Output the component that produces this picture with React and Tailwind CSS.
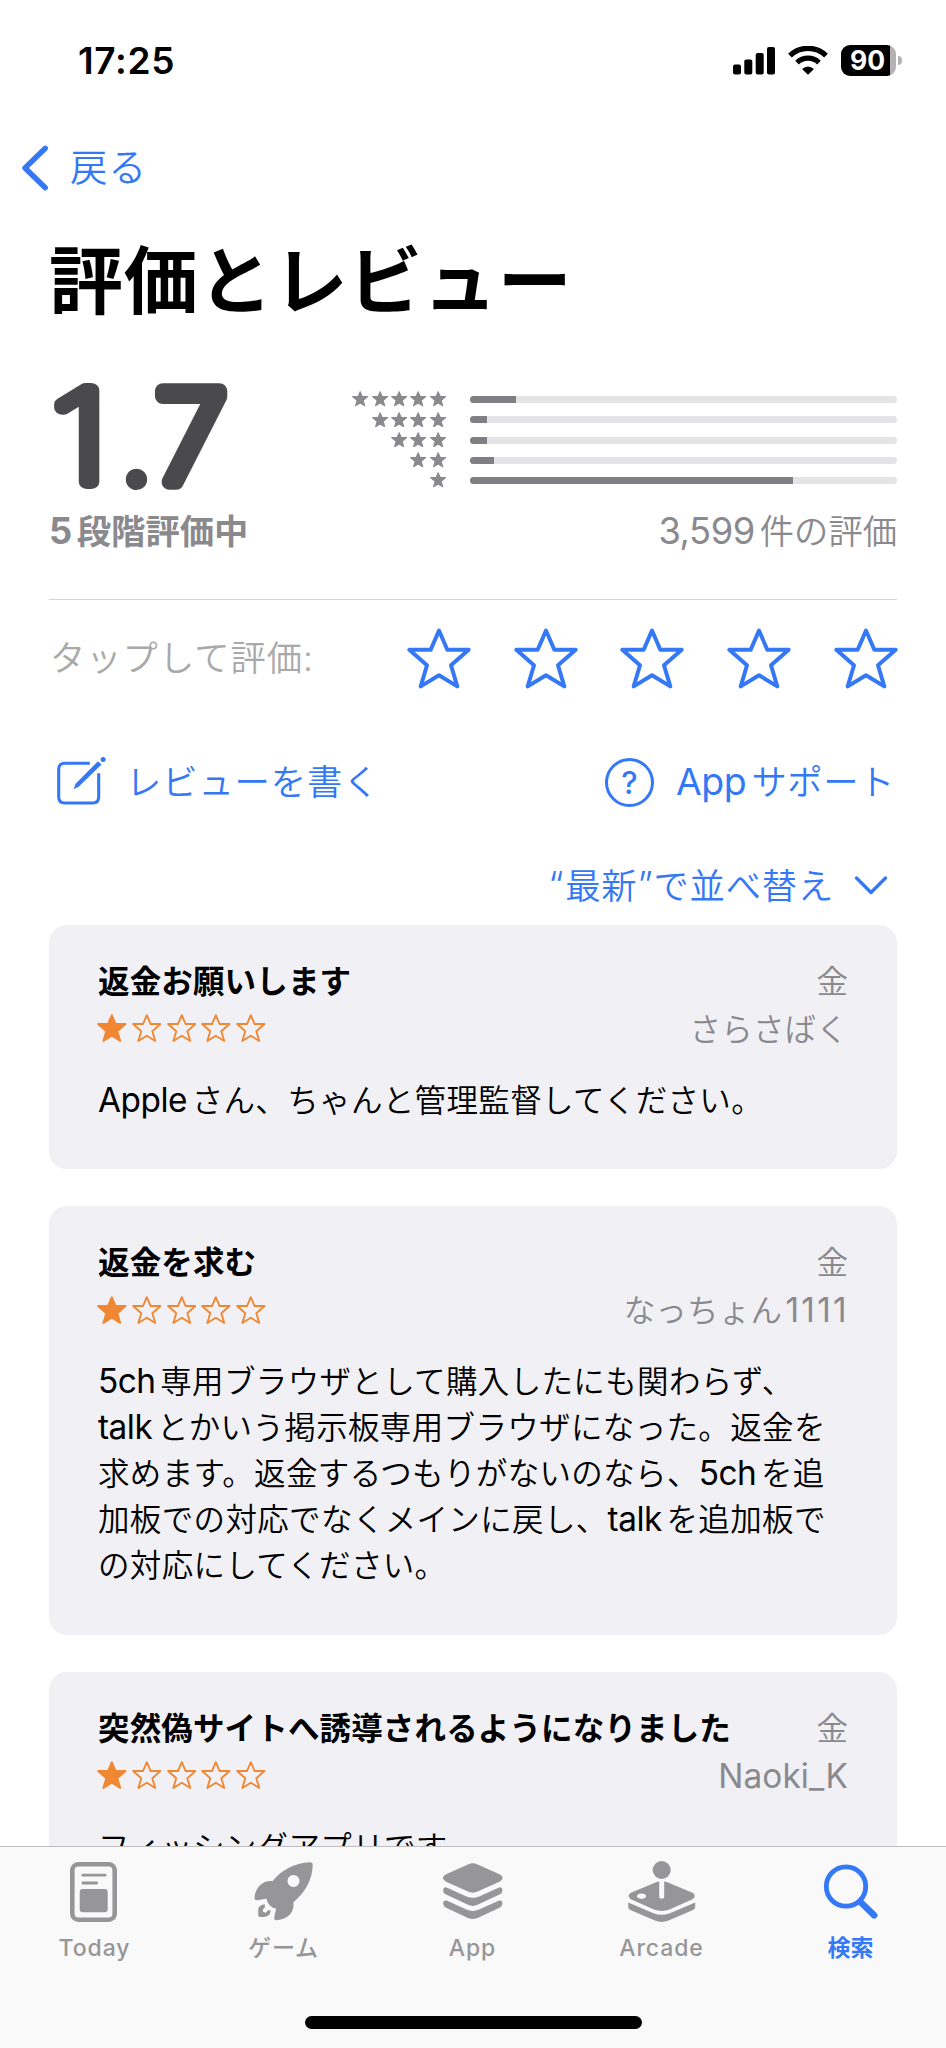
const LATIN = /([A-Za-z0-9_,:]+)/;

function Mixed({ children }) {
  const parts = children.split(LATIN).filter(Boolean);
  return parts.map((part, i) => {
    if (!LATIN.test(part)) return <span key={i}>{part}</span>;
    const before = i > 0 && !/[、。]$/.test(parts[i - 1]);
    const after = i < parts.length - 1;
    return (
      <span
        key={i}
        className={
          'text-[1.06em] leading-none [letter-spacing:var(--ls)] [font-weight:var(--latin)] ' +
          (before ? 'ml-[0.1em] ' : '') +
          (after ? 'mr-[0.14em]' : '')
        }
      >
        {part}
      </span>
    );
  });
}

const STAR = 'M0 -31.5 L8.3 -12.3 L29.7 -12.3 L12 3.3 L18.3 24.4 L0 13.2 L-18.3 24.4 L-12 3.3 L-29.7 -12.3 L-8.3 -12.3 Z';

function Star({ className, filled }) {
  return (
    <svg viewBox="-32 -34 64 61" className={className}>
      <path d={STAR} fill={filled ? 'currentColor' : 'none'} stroke="currentColor" strokeWidth="4" strokeLinejoin="round" />
    </svg>
  );
}

function StatusBar() {
  return (
    <div className="flex h-[121px] items-center justify-between pr-[44px] pl-[78px]">
      <span className="text-[37px] font-semibold tracking-[0.7px]">17:25</span>
      <div className="flex items-center">
        <svg width="42" height="30" viewBox="0 0 42 30">
          <rect x="0" y="18.5" width="8" height="10" rx="2" />
          <rect x="11.3" y="13.5" width="8" height="15" rx="2" />
          <rect x="22.7" y="7" width="8" height="21.5" rx="2" />
          <rect x="34" y="1" width="8" height="27.5" rx="2" />
        </svg>
        <svg width="40" height="30" viewBox="0 0 40 30" className="ml-[13px]">
          <path d="M2 9.6 A26 26 0 0 1 38 9.6" fill="none" stroke="#000" strokeWidth="5.4" />
          <path d="M9 16.6 A16 16 0 0 1 31 16.6" fill="none" stroke="#000" strokeWidth="5.2" />
          <path d="M20 28.8 L14 23 Q20 17.8 26 23 Z" />
        </svg>
        <div className="ml-[13px] flex h-[31px] w-[55px] items-center justify-center rounded-[9px] bg-[linear-gradient(90deg,#000_49px,#b3b3b3_49px)] pr-[2px] text-[26.5px] leading-none font-bold text-white">
          90
        </div>
        <div className="ml-[2px] h-[9px] w-[4px] rounded-r-full bg-[#b3b3b3]" />
      </div>
    </div>
  );
}

const BARS = [
  { stars: 5, fill: 46 },
  { stars: 4, fill: 17 },
  { stars: 3, fill: 17 },
  { stars: 2, fill: 24 },
  { stars: 1, fill: 322.5 },
];

function Summary() {
  return (
    <div className="mx-[49px] flex h-[255px] flex-col border-b-[1.5px] border-[#d4d4d6] pt-[25px]">
      <div className="flex justify-between">
        <svg
          width="200"
          height="130"
          viewBox="49 370 200 130"
          className="overflow-visible"
          fontFamily="Inter"
          fill="#4a4a4c"
          stroke="#4a4a4c"
          strokeWidth="15.5"
          strokeLinejoin="round"
          strokeLinecap="round"
        >
          <text fontSize="126" fontWeight="100" strokeWidth="14" transform="translate(51.8 482) scale(1.22 1)">1</text>
          <text fontSize="72" fontWeight="600" strokeWidth="10" x="125" y="484">.</text>
          <text fontSize="125" fontWeight="200" transform="translate(155.5 481.5) scale(1.03 1)">7</text>
        </svg>
        <div className="flex flex-col pt-[19px]">
          {BARS.map((row) => (
            <div key={row.stars} className="flex h-[20.25px] items-center">
              <div className="flex w-[97px] justify-end gap-[3.1px] text-[#8a8a8e]">
                {Array.from({ length: row.stars }, (_, i) => (
                  <Star key={i} filled className="h-[15.5px] w-[16.3px]" />
                ))}
              </div>
              <div className="mt-px ml-[24px] h-[7px] w-[427px] overflow-hidden rounded-full bg-[#e4e4e6]">
                <div className="h-full bg-[#7f7f84]" style={{ width: row.fill }} />
              </div>
            </div>
          ))}
        </div>
      </div>
      <div className="mt-[7px] flex h-[50px] items-center justify-between text-[34.3px] leading-[50px] text-[#8a8a8e]">
        <span className="font-semibold [--latin:700]"><Mixed>5段階評価中</Mixed></span>
        <span><Mixed>3,599件の評価</Mixed></span>
      </div>
    </div>
  );
}

function EditIcon() {
  return (
    <svg width="54" height="54" viewBox="0 0 54 54">
      <path
        d="M34.8 8.3 H9.7 Q3.7 8.3 3.7 14.3 V42 Q3.7 48 9.7 48 H37.7 Q43.7 48 43.7 42 V18.2"
        fill="none"
        stroke="currentColor"
        strokeWidth="3.1"
      />
      <path d="M43 6.2 L46.5 9.6 L23.6 31.8 L18.6 34.2 L20.6 28.8 Z" fill="currentColor" />
      <circle cx="48.1" cy="4.5" r="2.5" fill="currentColor" />
    </svg>
  );
}

function Actions() {
  return (
    <>
      <div className="flex h-[117px] items-center justify-between pr-[48.3px] pl-[50px] text-[35.3px] text-[#a9a9a9]">
        <span className="pt-[2px] tracking-[1px]">タップして評価:</span>
        <div className="flex gap-[42.7px] text-[#3478f6]">
          {[1, 2, 3, 4, 5].map((n) => (
            <Star key={n} className="h-[61px] w-[64px]" />
          ))}
        </div>
      </div>
      <div className="flex h-[130px] items-center justify-between pr-[51px] pl-[55px] text-[35.3px] text-[#3478f6]">
        <div className="flex items-center">
          <EditIcon />
          <span className="ml-[17px] pt-[2px] tracking-[0.9px]">レビューを書く</span>
        </div>
        <div className="flex items-center">
          <span className="flex size-[49px] items-center justify-center rounded-full border-[3px] border-[#3478f6] text-[31px] leading-none font-medium">?</span>
          <span className="ml-[22px] pt-[2px] tracking-[0.6px]"><Mixed>Appサポート</Mixed></span>
        </div>
      </div>
      <div className="flex h-[78px] items-center justify-end pr-[58px] text-[35.3px] text-[#3478f6]">
        <span className="pt-[2px] tracking-[0.8px]">
          <span className="mr-[1px] text-[1.06em] leading-none">“</span>
          最新
          <span className="text-[1.06em] leading-none">”</span>
          で並べ替え
        </span>
        <svg width="34" height="22" viewBox="0 0 34 22" className="ml-[20px]">
          <path d="M2.5 3 L17 17.5 L31.5 3" fill="none" stroke="currentColor" strokeWidth="3.4" strokeLinecap="round" strokeLinejoin="round" />
        </svg>
      </div>
    </>
  );
}

const REVIEWS = [
  { title: '返金お願いします', user: 'さらさばく', lines: ['Appleさん、ちゃんと管理監督してください。'] },
  {
    title: '返金を求む',
    user: 'なっちょん1111',
    userClass: '[--ls:2.3px] -mr-[1px]',
    lines: [
      '5ch専用ブラウザとして購入したにも関わらず、',
      'talkとかいう掲示板専用ブラウザになった。返金を',
      '求めます。返金するつもりがないのなら、5chを追',
      '加板での対応でなくメインに戻し、talkを追加板で',
      'の対応にしてください。',
    ],
  },
  { title: '突然偽サイトへ誘導されるようになりました', user: 'Naoki_K', userClass: '[--ls:0.1px]', lines: ['フィッシングアプリです'] },
];

function Review({ title, user, userClass = '', lines }) {
  return (
    <article className="rounded-[18px] bg-[#f1f0f5] px-[49px] pt-[33px] pb-[45px] text-[31.5px] whitespace-nowrap">
      <div className="flex h-[48px] items-center justify-between">
        <h2 className="font-semibold tracking-[0.15px]">{title}</h2>
        <span className="text-[#8a8a8e]">金</span>
      </div>
      <div className="flex h-[48px] items-center justify-between">
        <div className="-mt-[3px] -ml-px flex gap-[5.2px] text-[#ef8733]">
          {[1, 2, 3, 4, 5].map((n) => (
            <Star key={n} filled={n === 1} className="h-[28.2px] w-[29.6px]" />
          ))}
        </div>
        <span className={'tracking-[0.2px] text-[#8a8a8e] ' + userClass}><Mixed>{user}</Mixed></span>
      </div>
      <div className="mt-[24px] tracking-[0.35px]">
        {lines.map((line) => (
          <p key={line} className="h-[46.1px] leading-[46.1px]"><Mixed>{line}</Mixed></p>
        ))}
      </div>
    </article>
  );
}

function TodayIcon() {
  return (
    <svg width="47" height="60" viewBox="0 0 47 60" fill="currentColor" className="mr-[2px]">
      <rect x="2.3" y="2.3" width="42.4" height="55.4" rx="6" fill="none" stroke="currentColor" strokeWidth="4.6" />
      <rect x="11.5" y="11.8" width="25" height="2.8" rx="1.4" />
      <rect x="11.5" y="19.6" width="16.5" height="2.8" rx="1.4" />
      <rect x="9.7" y="27" width="28" height="23.2" rx="3" />
    </svg>
  );
}

function RocketIcon() {
  return (
    <svg width="59" height="59" viewBox="0 0 59 59" fill="currentColor">
      <path
        fillRule="evenodd"
        d="M56 .2 Q58.7 .2 58.7 3 C58.5 19 50 31.5 39.4 40.3 C40.6 50.5 34 57.5 22.5 58.2 Q20 58.3 20.2 56 C20.5 52.5 22 49.5 22 46.3 Q18.5 46.2 15.8 43.5 Q12.8 40.8 12.6 36.8 C9 36.8 6 38.2 2.8 38.2 Q.3 38.2 .5 35.8 C1.4 25.5 8.5 18.3 18.4 19.2 C27 8.5 40 .8 56 .2 Z M39.5 13 a6 6 0 1 0 .01 0 Z"
      />
      <path
        d="M10.8 42.3 C6.2 42.8 4.2 45.2 4.2 49 V53 Q4.2 54.9 6.2 54.9 H10 C14.2 54.9 16.4 52.4 16.8 48.6 L13.6 48.2 C13 50.3 11.9 51 10.2 50.4 C8.3 49.6 8.2 47.4 10.8 45.8 Z"
      />
    </svg>
  );
}

function LayersIcon() {
  return (
    <svg width="60" height="57" viewBox="0 0 60 57" fill="currentColor">
      <path d="M25 1.4 Q29.8 -.8 34.6 1.4 L56.5 11.3 Q62.8 15 56.5 18.7 L34.6 28.6 Q29.8 30.8 25 28.6 L3.1 18.7 Q-3.2 15 3.1 11.3 Z" />
      <path d="M3.5 24.4 L23.5 33.4 Q29.8 36 36.1 33.4 L56.1 24.4 Q59.4 24 59.4 27.4 Q59.4 30 57 31.2 L34.6 41.8 Q29.8 44 25 41.8 L2.6 31.2 Q.2 30 .2 27.4 Q.2 24 3.5 24.4 Z" />
      <path d="M3.5 37.6 L23.5 46.6 Q29.8 49.2 36.1 46.6 L56.1 37.6 Q59.4 37.2 59.4 40.6 Q59.4 43.2 57 44.4 L34.6 55 Q29.8 57.2 25 55 L2.6 44.4 Q.2 43.2 .2 40.6 Q.2 37.2 3.5 37.6 Z" />
    </svg>
  );
}

function ArcadeIcon() {
  return (
    <svg width="68" height="61" viewBox="0 0 68 61" fill="currentColor">
      <circle cx="33.7" cy="9" r="9" />
      <path
        fillRule="evenodd"
        d="M27.5 21.4 Q29.5 20.6 31.2 20.6 V36 Q31.2 37.8 33.7 37.8 Q36.2 37.8 36.2 36 V20.6 Q38 20.6 39.9 21.4 L64.5 31.8 Q69.2 35 64.5 38.2 L41.5 48.6 Q33.7 51.4 25.9 48.6 L2.9 38.2 Q-1.8 35 2.9 31.8 Z M13.5 32.4 a4.5 2.8 0 1 0 .01 0 Z"
      />
      <path d="M.2 41.6 L25.5 52.2 Q33.7 55.2 41.9 52.2 L67.2 41.6 V46 Q67.2 48 65 49 L40.5 59.6 Q33.7 62.2 26.9 59.6 L2.4 49 Q.2 48 .2 46 Z" />
    </svg>
  );
}

function SearchIcon() {
  return (
    <svg width="56" height="58" viewBox="0 0 56 58" fill="none" stroke="currentColor">
      <circle cx="23" cy="23.5" r="19.7" strokeWidth="4.8" />
      <path d="M38 39.5 L51.2 52.3" strokeWidth="6.6" strokeLinecap="round" />
    </svg>
  );
}

const TABS = [
  { label: 'Today', Icon: TodayIcon },
  { label: 'ゲーム', Icon: RocketIcon },
  { label: 'App', Icon: LayersIcon },
  { label: 'Arcade', Icon: ArcadeIcon },
  { label: '検索', Icon: SearchIcon, active: true },
];

function TabBar() {
  return (
    <nav className="flex h-[202px] flex-col items-center border-t-[1.5px] border-[#bfbfc1] bg-[#f9f9f9]">
      <div className="grid h-[169px] w-full grid-cols-5 pr-[1px]">
        {TABS.map(({ label, Icon, active }) => (
          <div key={label} className={'flex flex-col items-center pt-[13px] ' + (active ? 'text-[#3478f6]' : 'text-[#969698]')}>
            <div className="flex h-[63px] items-center"><Icon /></div>
            <span className={'mt-[10px] text-[23px] leading-[30px] ' + (active ? 'font-bold' : 'font-medium tracking-[0.9px]')}>{label}</span>
          </div>
        ))}
      </div>
      <div className="h-[12.5px] w-[337px] rounded-full bg-black" />
    </nav>
  );
}

export default function App() {
  return (
    <div className='h-[2048px] w-[946px] overflow-hidden bg-white font-["Inter","Noto_Sans_CJK_JP",sans-serif] [font-weight:350] text-black [--latin:400] [--ls:-0.5px]'>
      <div className="h-[1846px] overflow-hidden">
        <StatusBar />
        <div className="flex h-[94px] items-center pl-[20px] text-[37.5px] text-[#3478f6]">
          <svg width="30" height="48" viewBox="0 0 30 48">
            <path d="M25.3 4.3 L5 24 L25.3 43.7" fill="none" stroke="currentColor" strokeWidth="5.4" strokeLinecap="round" strokeLinejoin="round" />
          </svg>
          <span className="ml-[20px] pt-px tracking-[1px]">戻る</span>
        </div>
        <h1 className="flex h-[130px] items-center pt-[2px] pl-[49px] text-[74px] leading-none font-semibold tracking-[0.8px] whitespace-nowrap">評価とレビュー</h1>
        <Summary />
        <Actions />
        <div className="mx-[49px] flex flex-col gap-[37px]">
          {REVIEWS.map((r) => (
            <Review key={r.title} {...r} />
          ))}
        </div>
      </div>
      <TabBar />
    </div>
  );
}
